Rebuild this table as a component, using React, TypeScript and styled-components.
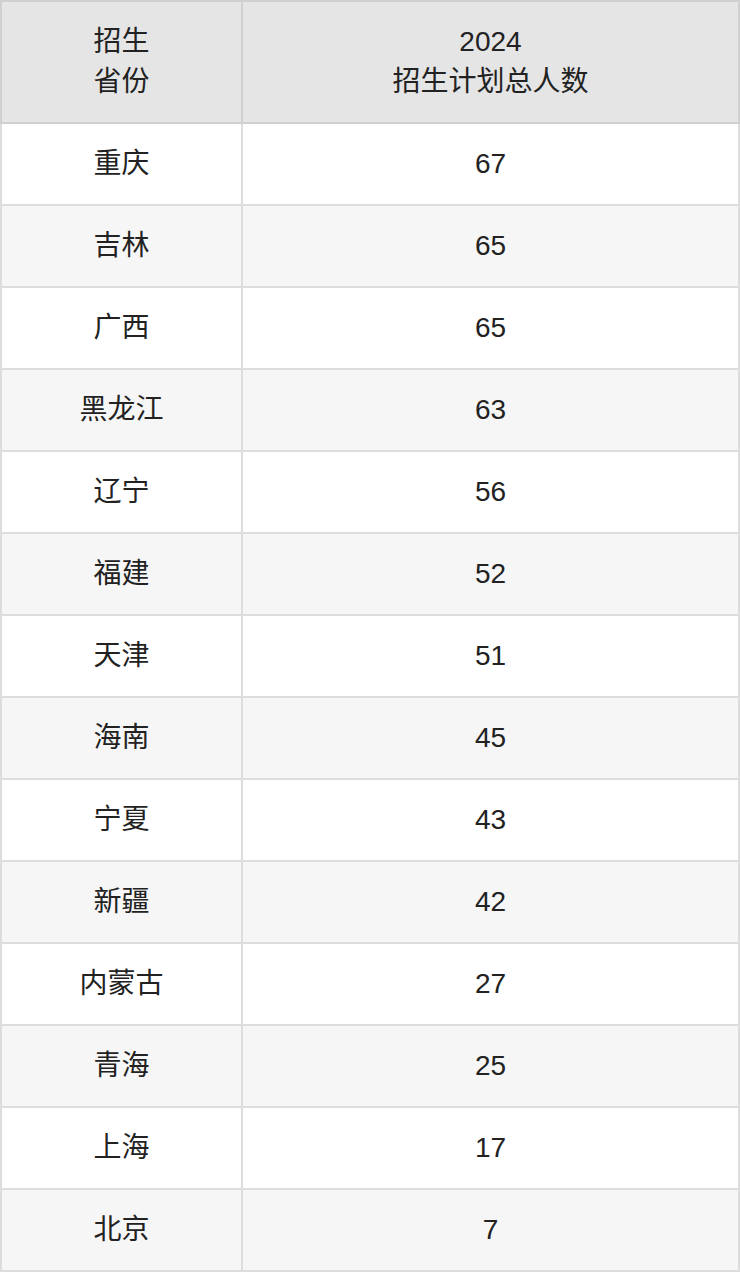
import styled, { createGlobalStyle } from 'styled-components'

const rows: [string, number][] = [
    ['重庆', 67],
    ['吉林', 65],
    ['广西', 65],
    ['黑龙江', 63],
    ['辽宁', 56],
    ['福建', 52],
    ['天津', 51],
    ['海南', 45],
    ['宁夏', 43],
    ['新疆', 42],
    ['内蒙古', 27],
    ['青海', 25],
    ['上海', 17],
    ['北京', 7],
]

const GlobalStyle = createGlobalStyle`
    body {
        margin: 0;
        background: #fff;
        font-family: "Liberation Sans", "Noto Sans CJK SC", sans-serif;
    }
`

const App = () => {
    return (
        <>
            <GlobalStyle />
            <Table>
                <colgroup>
                    <col style={{ width: 241 }} />
                    <col />
                </colgroup>
                <thead>
                    <tr>
                        <HeadCell>
                            招生
                            <br />
                            省份
                        </HeadCell>
                        <HeadCell>
                            2024
                            <br />
                            招生计划总人数
                        </HeadCell>
                    </tr>
                </thead>
                <tbody>
                    {rows.map(([name, count], i) => (
                        <Row key={name} striped={i % 2 === 1}>
                            <Cell>{name}</Cell>
                            <Cell>{count}</Cell>
                        </Row>
                    ))}
                </tbody>
            </Table>
        </>
    )
}

export default App

const Table = styled.table`
    width: 740px;
    border-collapse: collapse;
    table-layout: fixed;
    color: #222;
    font-size: 28px;
`

const HeadCell = styled.th`
    height: 122px;
    padding: 0;
    background: #e5e5e5;
    border: 2px solid #d0d0d0;
    font-weight: normal;
    line-height: 40px;
    text-align: center;
    box-sizing: border-box;
`

const Row = styled.tr<{ striped: boolean }>`
    background: ${(props) => (props.striped ? '#f6f6f6' : '#ffffff')};
`

const Cell = styled.td`
    height: 80px;
    padding: 0;
    border: 2px solid #dddddd;
    text-align: center;
    line-height: 30px;
`
